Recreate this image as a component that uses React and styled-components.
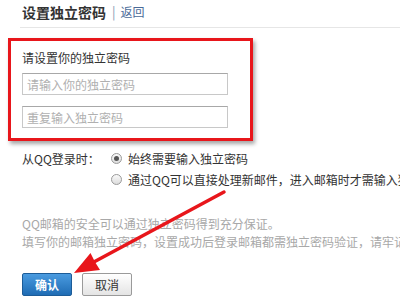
import React from 'react';
import styled, { createGlobalStyle } from 'styled-components';

const GlobalStyle = createGlobalStyle`
  html, body {
    margin: 0;
    padding: 0;
    background: #fff;
    overflow: hidden;
  }
  body {
    font-family: "Noto Sans CJK SC", "Noto Sans", sans-serif;
    font-size: 12px;
    color: #333;
  }
`;

const Page = styled.div`
  position: relative;
  width: 400px;
  height: 300px;
  overflow: hidden;
  white-space: nowrap;
`;

const Header = styled.div`
  box-sizing: border-box;
  display: flex;
  align-items: center;
  height: 28px;
  margin-left: 20px;
  padding: 0 0 4px 2px;
  border-bottom: 1px solid #e6e6e6;
`;

const Title = styled.span`
  font-size: 14px;
  font-weight: bold;
  color: #333;
  line-height: 1;
`;

const Sep = styled.span`
  color: #8899b0;
  margin: 0 5px 0 6px;
  font-size: 13px;
`;

const BackLink = styled.a`
  color: #4a6a98;
  font-size: 12px;
  text-decoration: none;
`;

const HighlightBox = styled.div`
  box-sizing: border-box;
  width: 245px;
  margin: 10px 0 0 8px;
  padding: 9px 0 10px 11px;
  border: 3px solid #e8161b;
  box-shadow: 2px 3px 4px rgba(0, 0, 0, 0.35);
`;

const FieldLabel = styled.div`
  height: 16px;
  line-height: 16px;
  margin-bottom: 7px;
  color: #333;
`;

const Input = styled.input`
  display: block;
  box-sizing: border-box;
  width: 206px;
  height: 22px;
  margin: 0 0 ${p => (p.$last ? 0 : 11)}px 0;
  padding: 0 4px;
  border: 1px solid #c8c8c8;
  border-top-color: #a8a8a8;
  font-family: inherit;
  font-size: 12px;
  outline: none;
  &::placeholder {
    color: #b0b0b0;
  }
`;

const Options = styled.div`
  display: grid;
  grid-template-columns: 89px auto;
  margin: 7px 0 0 22px;
`;

const OptLabel = styled.div`
  height: 21px;
  line-height: 21px;
  color: #333;
`;

const OptRow = styled.label`
  grid-column: 2;
  display: flex;
  align-items: center;
  height: 21px;
  gap: 6px;
  color: #333;
`;

const Radio = styled.span`
  position: relative;
  box-sizing: border-box;
  width: 11px;
  height: 11px;
  border-radius: 50%;
  border: 1px solid #9a9a9a;
  background: linear-gradient(#fafafa, #dcdcdc);
  &::after {
    content: '';
    display: ${p => (p.$checked ? 'block' : 'none')};
    position: absolute;
    left: 2px;
    top: 2px;
    width: 5px;
    height: 5px;
    border-radius: 50%;
    background: #555;
  }
`;

const Note = styled.div`
  margin: 25px 0 0 22px;
  color: #a8a8a8;
  line-height: 18px;
`;

const Buttons = styled.div`
  display: flex;
  gap: 10px;
  margin: 22px 0 0 22px;
`;

const Button = styled.button`
  box-sizing: border-box;
  width: 50px;
  height: 23px;
  padding: 0;
  border-radius: 2px;
  font-family: inherit;
  font-size: 12px;
  font-weight: ${p => (p.$primary ? 'bold' : 'normal')};
  color: ${p => (p.$primary ? '#fff' : '#333')};
  border: 1px solid ${p => (p.$primary ? '#1c5c98' : '#9a9a9a')};
  background: ${p =>
    p.$primary
      ? 'linear-gradient(#4a9be0, #1f6cb4)'
      : 'linear-gradient(#ffffff, #e4e4e4)'};
`;

const Overlay = styled.svg`
  position: absolute;
  left: 0;
  top: 0;
  pointer-events: none;
`;

export default function App() {
  return (
    <Page>
      <GlobalStyle />
      <Header>
        <Title>设置独立密码</Title>
        <Sep>|</Sep>
        <BackLink href="#">返回</BackLink>
      </Header>

      <HighlightBox>
        <FieldLabel>请设置你的独立密码</FieldLabel>
        <Input type="password" placeholder="请输入你的独立密码" />
        <Input type="password" placeholder="重复输入独立密码" $last />
      </HighlightBox>

      <Options>
        <OptLabel>从QQ登录时：</OptLabel>
        <OptRow style={{ gridRow: 1 }}>
          <Radio $checked />
          始终需要输入独立密码
        </OptRow>
        <OptRow>
          <Radio />
          通过QQ可以直接处理新邮件，进入邮箱时才需输入独立密码
        </OptRow>
      </Options>

      <Note>
        QQ邮箱的安全可以通过独立密码得到充分保证。
        <br />
        填写你的邮箱独立密码，设置成功后登录邮箱都需独立密码验证，请牢记。
      </Note>

      <Buttons>
        <Button $primary>确认</Button>
        <Button>取消</Button>
      </Buttons>

      <Overlay width="400" height="300" viewBox="0 0 400 300">
        <line x1="224" y1="192" x2="92" y2="263" stroke="#e8161b" strokeWidth="3.5" strokeLinecap="round" />
        <polygon points="74,273 90.5,253 95,262 100,270" fill="#e8161b" />
      </Overlay>
    </Page>
  );
}
